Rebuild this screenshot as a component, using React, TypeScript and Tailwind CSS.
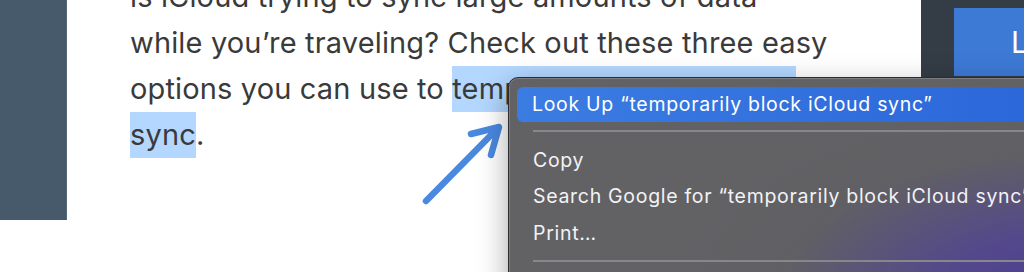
export default function App() {
  const body = "font-['Inter',sans-serif] text-[29px] tracking-[0.15px] leading-[46px] h-[46px] whitespace-nowrap";
  const item = "h-[36.5px] flex items-center pl-[24px] whitespace-nowrap";

  return (
    <div className="relative flex h-[272px] w-[1024px] overflow-hidden bg-white">
      {/* Barre latérale gauche */}
      <div className="h-[220px] w-[67px] shrink-0 border-r border-[#56677a] bg-[#475a6b]" />

      {/* Texte de l'article */}
      <div className="-mt-[26px] w-[854px] shrink-0 pl-[63px] text-[#3a3a3a]">
        <div className={body}>is iCloud trying to sync large amounts of data</div>
        <div className={body}>while you’re traveling? Check out these three easy</div>
        <div className={body}>
          options you can use to{" "}
          <span className="inline-block h-[46px] bg-[#b3d7ff] pr-[6px] align-top">temporarily block iCloud</span>
        </div>
        <div className={body}>
          <span className="inline-block h-[46px] bg-[#b3d7ff] align-top">sync</span>.
        </div>
      </div>

      {/* Colonne droite */}
      <div className="flex-1 bg-[#343c45] pl-[33px] pt-[8px]">
        <div className="flex h-[68px] items-center bg-[#3d7ad6] pl-[57px] font-['Inter',sans-serif] text-[30px] text-white">
          L
        </div>
      </div>

      {/* Flèche */}
      <svg
        className="absolute left-0 top-0"
        width="1024"
        height="272"
        viewBox="0 0 1024 272"
        fill="none"
        aria-hidden
      >
        <path
          d="M426 201 L497 129 M471 134 L499 127 L491 155"
          stroke="#4a89e0"
          strokeWidth="6.5"
          strokeLinecap="round"
          strokeLinejoin="round"
        />
      </svg>

      {/* Menu contextuel */}
      <div className="absolute left-[508px] top-[77px] h-[230px] w-[560px] rounded-[10px] border border-[#2c2c2e] bg-[radial-gradient(ellipse_70%_90%_at_100%_100%,#4a3b96_0%,#54488c_35%,#606064_75%,#626265_100%)] shadow-[0_10px_30px_rgba(0,0,0,0.35),inset_0_0_0_1px_rgba(255,255,255,0.18)] font-['Inter',sans-serif] text-[19.5px] tracking-[0.7px] text-[#f2f2f4]">
        <div className="px-[8px] pt-[9px]">
          <div className="flex h-[35px] items-center rounded-[6px] bg-[linear-gradient(90deg,#3b7ce2,#2b66d9)] pl-[15px] whitespace-nowrap text-white">
            Look Up “temporarily block iCloud sync”
          </div>
        </div>
        <div className="ml-[24px] mt-[8px] mb-[10px] h-[2px] bg-[#87878b]" />
        <div className={item}>Copy</div>
        <div className={item}>Search Google for “temporarily block iCloud sync”</div>
        <div className={item}>Print…</div>
        <div className="ml-[24px] mt-[8px] h-[2px] bg-[#87878b]" />
      </div>
    </div>
  );
}
